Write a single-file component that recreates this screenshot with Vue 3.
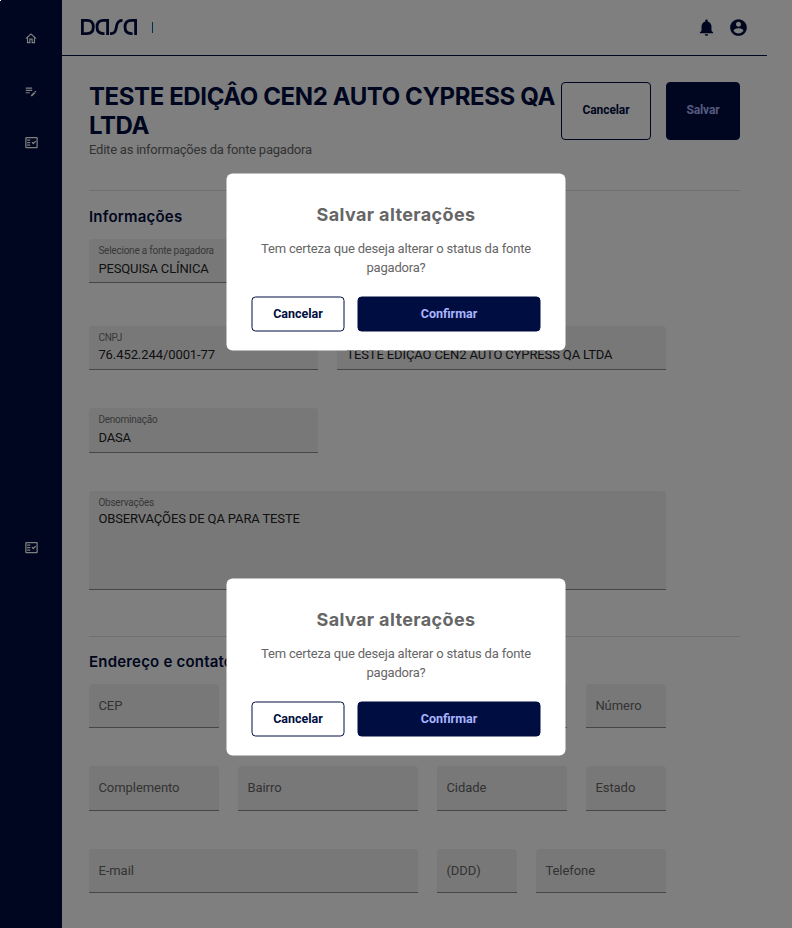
<script setup>
const dialogs = ['first', 'second']
const payer = [
  [{ label: 'Selecione a fonte pagadora', value: 'PESQUISA CLÍNICA', w: 'w-half' }],
  [
    { label: 'CNPJ', value: '76.452.244/0001-77', w: 'w-half raised digits' },
    { label: '', value: 'TESTE EDIÇÂO CEN2 AUTO CYPRESS QA LTDA', w: 'w-long raised' },
  ],
  [{ label: 'Denominação', value: 'DASA', w: 'w-half' }],
  [{ label: 'Observações', value: 'OBSERVAÇÕES DE QA PARA TESTE', w: 'w-full area' }],
]
const address = [
  [{ label: 'CEP', w: 'w-md' }, { label: '', w: 'w-long' }, { label: 'Número', w: 'w-sm' }],
  [
    { label: 'Complemento', w: 'w-md' },
    { label: 'Bairro', w: 'w-lg' },
    { label: 'Cidade', w: 'w-md' },
    { label: 'Estado', w: 'w-sm' },
  ],
  [{ label: 'E-mail', w: 'w-long' }, { label: '(DDD)', w: 'w-sm' }, { label: 'Telefone', w: 'w-md' }],
]
</script>

<template>
  <div class="screen">
    <aside class="sidebar">
      <svg class="nav home" viewBox="0 0 24 24"><path d="M12 5.69l5 4.5V18h-2v-6H9v6H7v-7.81l5-4.5M12 3L2 12h3v8h6v-6h2v6h6v-8h3L12 3z" /></svg>
      <svg class="nav note" viewBox="0 0 24 24"><path d="M3 10h11v2H3v-2zm0-2h11V6H3v2zm0 8h7v-2H3v2zm15.01-3.13.71-.71a1 1 0 0 1 1.41 0l.71.71a1 1 0 0 1 0 1.41l-.71.71-2.12-2.12zm-.71.71-5.3 5.3V21h2.12l5.3-5.3-2.12-2.12z" /></svg>
      <svg class="nav check" viewBox="0 0 24 24"><path fill-rule="evenodd" d="M20 3H4c-1.100 0-2 .9-2 2v14c0 1.100.9 2 2 2h16c1.100 0 2-.9 2-2V5c0-1.100-.9-2-2-2zm0 16H4V5h16v14zM19.410 10.420 17.990 9l-3.170 3.170-1.410-1.420L12 12.160 14.820 15zM5 7h5v2H5zM5 11h5v2H5zM5 15h5v2H5z" /></svg>
      <svg class="nav check low" viewBox="0 0 24 24"><path fill-rule="evenodd" d="M20 3H4c-1.100 0-2 .9-2 2v14c0 1.100.9 2 2 2h16c1.100 0 2-.9 2-2V5c0-1.100-.9-2-2-2zm0 16H4V5h16v14zM19.410 10.420 17.990 9l-3.170 3.170-1.410-1.420L12 12.160 14.820 15zM5 7h5v2H5zM5 11h5v2H5zM5 15h5v2H5z" /></svg>
    </aside>

    <div class="main">
      <header class="topbar">
        <svg class="logo" viewBox="0 0 58 18" aria-label="Dasa">
          <path d="M2.400 2.400v13.200H7q6.300 0 6.300-6.600T7 2.400zM27.600 17V2.400H23.500q-6.500 0-6.500 6.600t6.500 6.600h1M30 15.600h1q4 0 5-4.600l.8-4q1.200-4.600 5.700-4.600M55.600 17V2.400h-4.100q-6.500 0-6.500 6.600t6.500 6.600h1" />
        </svg>
        <span class="bar"></span>
        <svg class="bell" viewBox="0 0 24 24"><path d="M12 22c1.100 0 2-.9 2-2h-4c0 1.100.9 2 2 2zm6-6v-5c0-3.070-1.630-5.640-4.500-6.320V4c0-.83-.67-1.500-1.500-1.500s-1.500.67-1.500 1.500v.68C7.640 5.360 6 7.920 6 11v5l-2 2v1h16v-1l-2-2z" /></svg>
        <svg class="user" viewBox="0 0 24 24"><path d="M12 2C6.480 2 2 6.480 2 12s4.480 10 10 10 10-4.480 10-10S17.520 2 12 2zm0 3c1.660 0 3 1.340 3 3s-1.340 3-3 3-3-1.340-3-3 1.340-3 3-3zm0 14.200c-2.500 0-4.710-1.280-6-3.220.03-1.990 4-3.080 6-3.080 1.990 0 5.970 1.090 6 3.080-1.290 1.940-3.500 3.220-6 3.220z" /></svg>
      </header>

      <main class="content">
        <div class="head">
          <div class="titles">
            <h1>TESTE EDIÇÂO CEN2 AUTO CYPRESS QA<br />LTDA</h1>
            <p>Edite as informações da fonte pagadora</p>
          </div>
          <button class="btn outline big">Cancelar</button>
          <button class="btn solid big save">Salvar</button>
        </div>
        <section class="info">
          <h2>Informações</h2>
          <div v-for="(row, i) in payer" :key="i" class="row">
            <div v-for="(f, j) in row" :key="j" class="field" :class="f.w">
              <label>{{ f.label }}</label>
              <span>{{ f.value }}</span>
            </div>
          </div>
        </section>
        <section class="address">
          <h2>Endereço e contato</h2>
          <div v-for="(row, i) in address" :key="i" class="row">
            <div v-for="(f, j) in row" :key="j" class="field empty" :class="f.w">{{ f.label }}</div>
          </div>
        </section>
      </main>
    </div>

    <div class="overlay">
      <div v-for="d in dialogs" :key="d" class="dialog">
        <h3>Salvar alterações</h3>
        <p>Tem certeza que deseja alterar o status da fonte<br />pagadora?</p>
        <div class="actions">
          <button class="btn outline">Cancelar</button>
          <button class="btn solid confirm">Confirmar</button>
        </div>
      </div>
      <i class="dot"></i>
    </div>
  </div>
</template>

<style>
body {
  margin: 0;
}
</style>

<style scoped>
* {
  box-sizing: border-box;
}
.screen {
  position: relative;
  display: flex;
  width: 792px;
  height: 928px;
  overflow: hidden;
  background: #fff;
  font-family: Roboto, 'Liberation Sans', sans-serif;
  color: #222;
}
h1, h2, h3, p {
  margin: 0;
}
.sidebar {
  display: flex;
  flex-direction: column;
  align-items: center;
  width: 62px;
  padding-top: 31px;
  background: #000d40;
}
.nav {
  flex: none;
  width: 14px;
  height: 14px;
  fill: #fff;
}
.home { transform: translateY(0.500px); }
.note { margin-top: 39px; }
.check {
  width: 15px;
  height: 15px;
  margin-top: 37px;
}
.low { margin-top: 390px; }
.main {
  flex: 1;
}
.topbar {
  display: flex;
  align-items: center;
  width: 705px;
  height: 56px;
  padding: 0 19px 0 18px;
  border-bottom: 1px solid #000d40;
}
.logo {
  width: 58px;
  height: 18px;
  margin-bottom: 1px;
  fill: none;
  stroke: #000d40;
  stroke-width: 2.8;
}
.bar {
  width: 1px;
  height: 11px;
  margin: 0 auto 0 14px;
  background: #005d9c;
}
.bell, .user {
  width: 20px;
  height: 20px;
  fill: #000d40;
  transform: translate(0.500px, -0.500px);
}
.bell { margin-right: 12px; }
.content {
  width: 678px;
  padding: 26px 0 0 27px;
}
.head {
  display: flex;
  height: 109px;
  border-bottom: 1px solid #dedede;
}
.titles {
  width: 472px;
  white-space: nowrap;
}
h1 {
  font: 650 24px/29px Inter, sans-serif;
  letter-spacing: -0.400px;
  color: #000d40;
}
.titles p {
  font-size: 13px;
  line-height: 19px;
  letter-spacing: -0.220px;
  color: #666;
}
.btn {
  height: 36px;
  padding: 0 0 2px;
  border: 1px solid #000d40;
  border-radius: 4px;
  background: transparent;
  font: 700 12.5px Roboto, sans-serif;
  color: #000d40;
}
.btn.big {
  width: 90px;
  height: 58px;
  font-size: 12px;
  letter-spacing: -0.100px;
}
.btn.solid {
  background: #000d40;
  color: #a9b5ff;
}
.btn.save {
  width: 74px;
  margin-left: 15px;
}
h2 {
  height: 48px;
  padding-top: 16px;
  font: 600 15px/19px Inter, sans-serif;
  letter-spacing: 0.200px;
  color: #000d40;
}
.info {
  height: 446px;
  border-bottom: 1px solid #dedede;
}
.info, .address {
  display: flex;
  flex-direction: column;
}
.address h2 {
  height: 47px;
  padding-top: 15px;
}
.row {
  display: flex;
  gap: 19px;
  height: 44px;
  margin-bottom: 39px;
}
.info .row:nth-child(2) { margin-bottom: 43px; }
.info .row:nth-child(3) { margin-bottom: 38px; }
.info .row:nth-child(4) { height: 45px; margin-bottom: 38px; }
.info .row:nth-child(5) { height: 99px; margin: 0; }
.address .row:nth-child(2) { margin-bottom: 38px; }
.address .row:nth-child(3) { height: 45px; margin-bottom: 38px; }
.field {
  display: flex;
  flex-direction: column;
  padding: 6px 9px 0 9.400px;
  border-bottom: 1px solid #8c8c8c;
  border-radius: 4px 4px 0 0;
  background: #f1f1f1;
  font-size: 13px;
  line-height: 18px;
  letter-spacing: -0.130px;
  white-space: nowrap;
}
.field label {
  height: 15px;
  font-size: 10px;
  line-height: 12px;
  letter-spacing: -0.230px;
  color: #717171;
}
.field.raised label { height: 14px; }
.field.digits span { letter-spacing: -0.080px; }
.field.area label { height: 13px; }
.field.empty {
  padding-top: 13px;
  letter-spacing: -0.050px;
  color: #666;
}
.w-sm { width: 80px; }
.w-md { width: 130px; }
.w-lg { width: 180px; }
.w-half { width: 229px; }
.w-long { width: 329px; }
.w-full { width: 577px; }
.overlay {
  position: absolute;
  inset: 0;
  display: flex;
  flex-direction: column;
  align-items: center;
  gap: 228px;
  padding: 173px 1px 0 0;
  background: rgba(0, 0, 0, 0.5);
}
.dialog {
  width: 339px;
  height: 177px;
  padding: 29px 25px 0;
  border-radius: 6px;
  background: #fff;
  text-align: center;
  transform: translate(0.500px, 0.500px);
}
.dialog h3 {
  font: 700 18px/24px Inter, sans-serif;
  letter-spacing: 0.370px;
  color: #666;
}
.dialog p {
  margin-top: 12px;
  font-size: 13px;
  line-height: 19px;
  letter-spacing: -0.190px;
  color: #666;
}
.actions {
  display: flex;
  gap: 13px;
  margin-top: 20px;
}
.actions .btn {
  height: 35px;
  padding-bottom: 3px;
}
.actions .outline { width: 93px; }
.confirm { flex: 1; }
.dot {
  position: absolute;
  top: 0;
  left: 0;
  width: 1px;
  height: 1px;
  background: #fff;
}
</style>
